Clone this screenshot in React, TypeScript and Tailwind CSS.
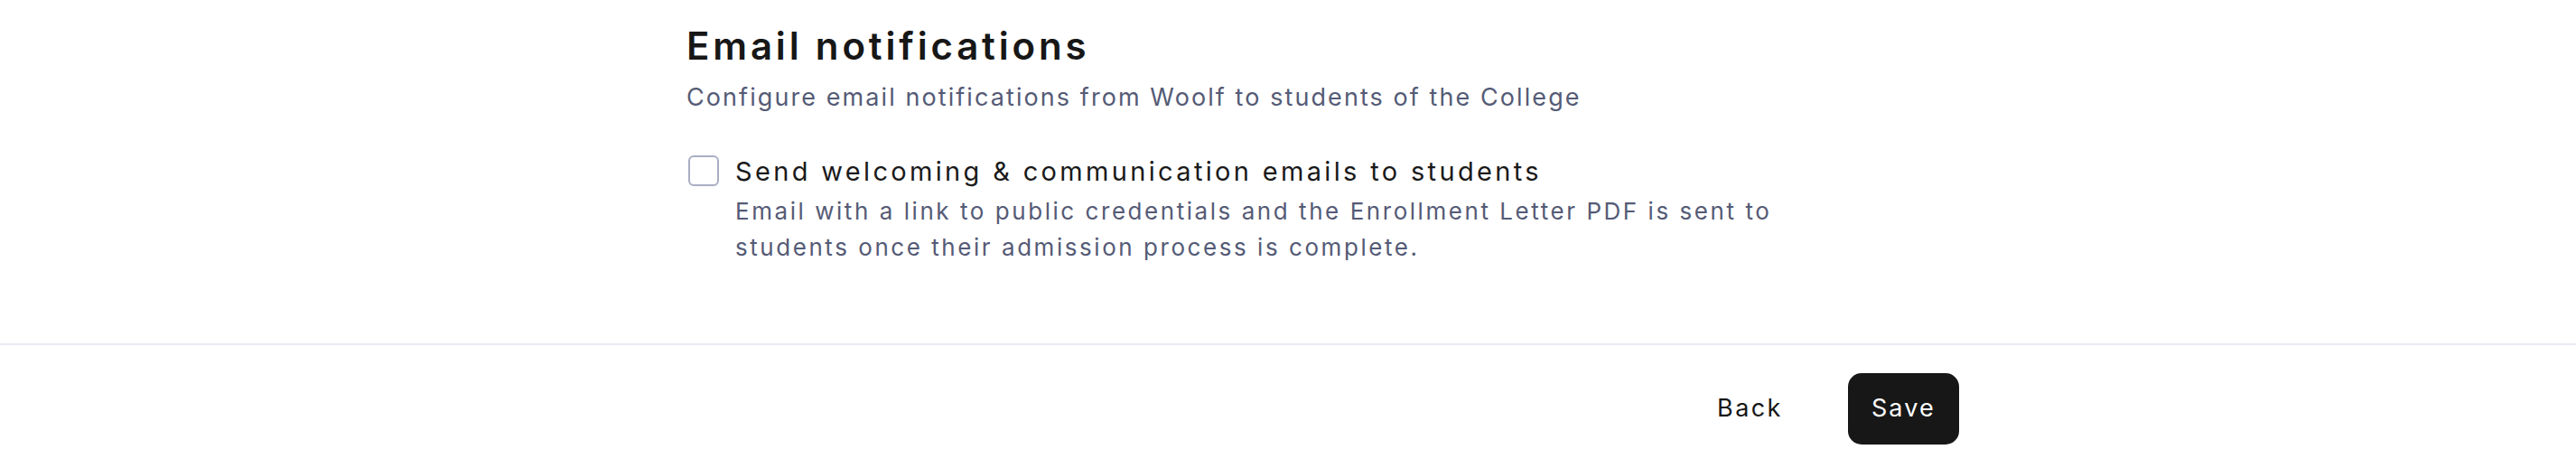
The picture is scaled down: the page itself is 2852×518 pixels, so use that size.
export default function App() {
  return (
    <div className="min-h-screen w-full bg-white font-['Inter',sans-serif]">
      {/* Notifications section */}
      <section className="pl-[760px] pt-[25px]">
        <div className="w-[1409px]">
          <h2 className="text-[42px] leading-[52px] font-semibold tracking-[0.091em] text-[#171717]">
            Email notifications
          </h2>
          <p className="mt-[11px] text-[27px] leading-[40px] tracking-[0.077em] text-[#555b76]">
            Configure email notifications from Woolf to students of the College
          </p>

          <label className="mt-[40px] flex items-start gap-[18px] cursor-pointer">
            <span className="mt-[4px] ml-[2px] block h-[34px] w-[34px] shrink-0 rounded-[6px] border-2 border-[#a9aec4] bg-white" />
            <div className="pt-[2px]">
              <div className="text-[29px] leading-[40px] tracking-[0.115em] text-[#1a1a1a]">
                Send welcoming &amp; communication emails to students
              </div>
              <p className="mt-[4px] max-w-[1175px] text-[26px] leading-[40px] tracking-[0.098em] text-[#555b76]">
                Email with a link to public credentials and the Enrollment Letter PDF is sent to students once their
                admission process is complete.
              </p>
            </div>
          </label>
        </div>
      </section>

      {/* Footer actions */}
      <div className="mt-[86px] border-t-2 border-[#e9ebf4]">
        <div className="pl-[760px] pt-[31px]">
          <div className="flex w-[1409px] items-center justify-end gap-[46px]">
            <button type="button" className="h-[79px] px-[26px] text-[27px] tracking-[0.09em] text-[#171717]">
              Back
            </button>
            <button
              type="button"
              className="h-[79px] rounded-[15px] bg-[#171717] px-[26px] text-[27px] tracking-[0.08em] text-white"
            >
              Save
            </button>
          </div>
        </div>
      </div>
    </div>
  );
}
